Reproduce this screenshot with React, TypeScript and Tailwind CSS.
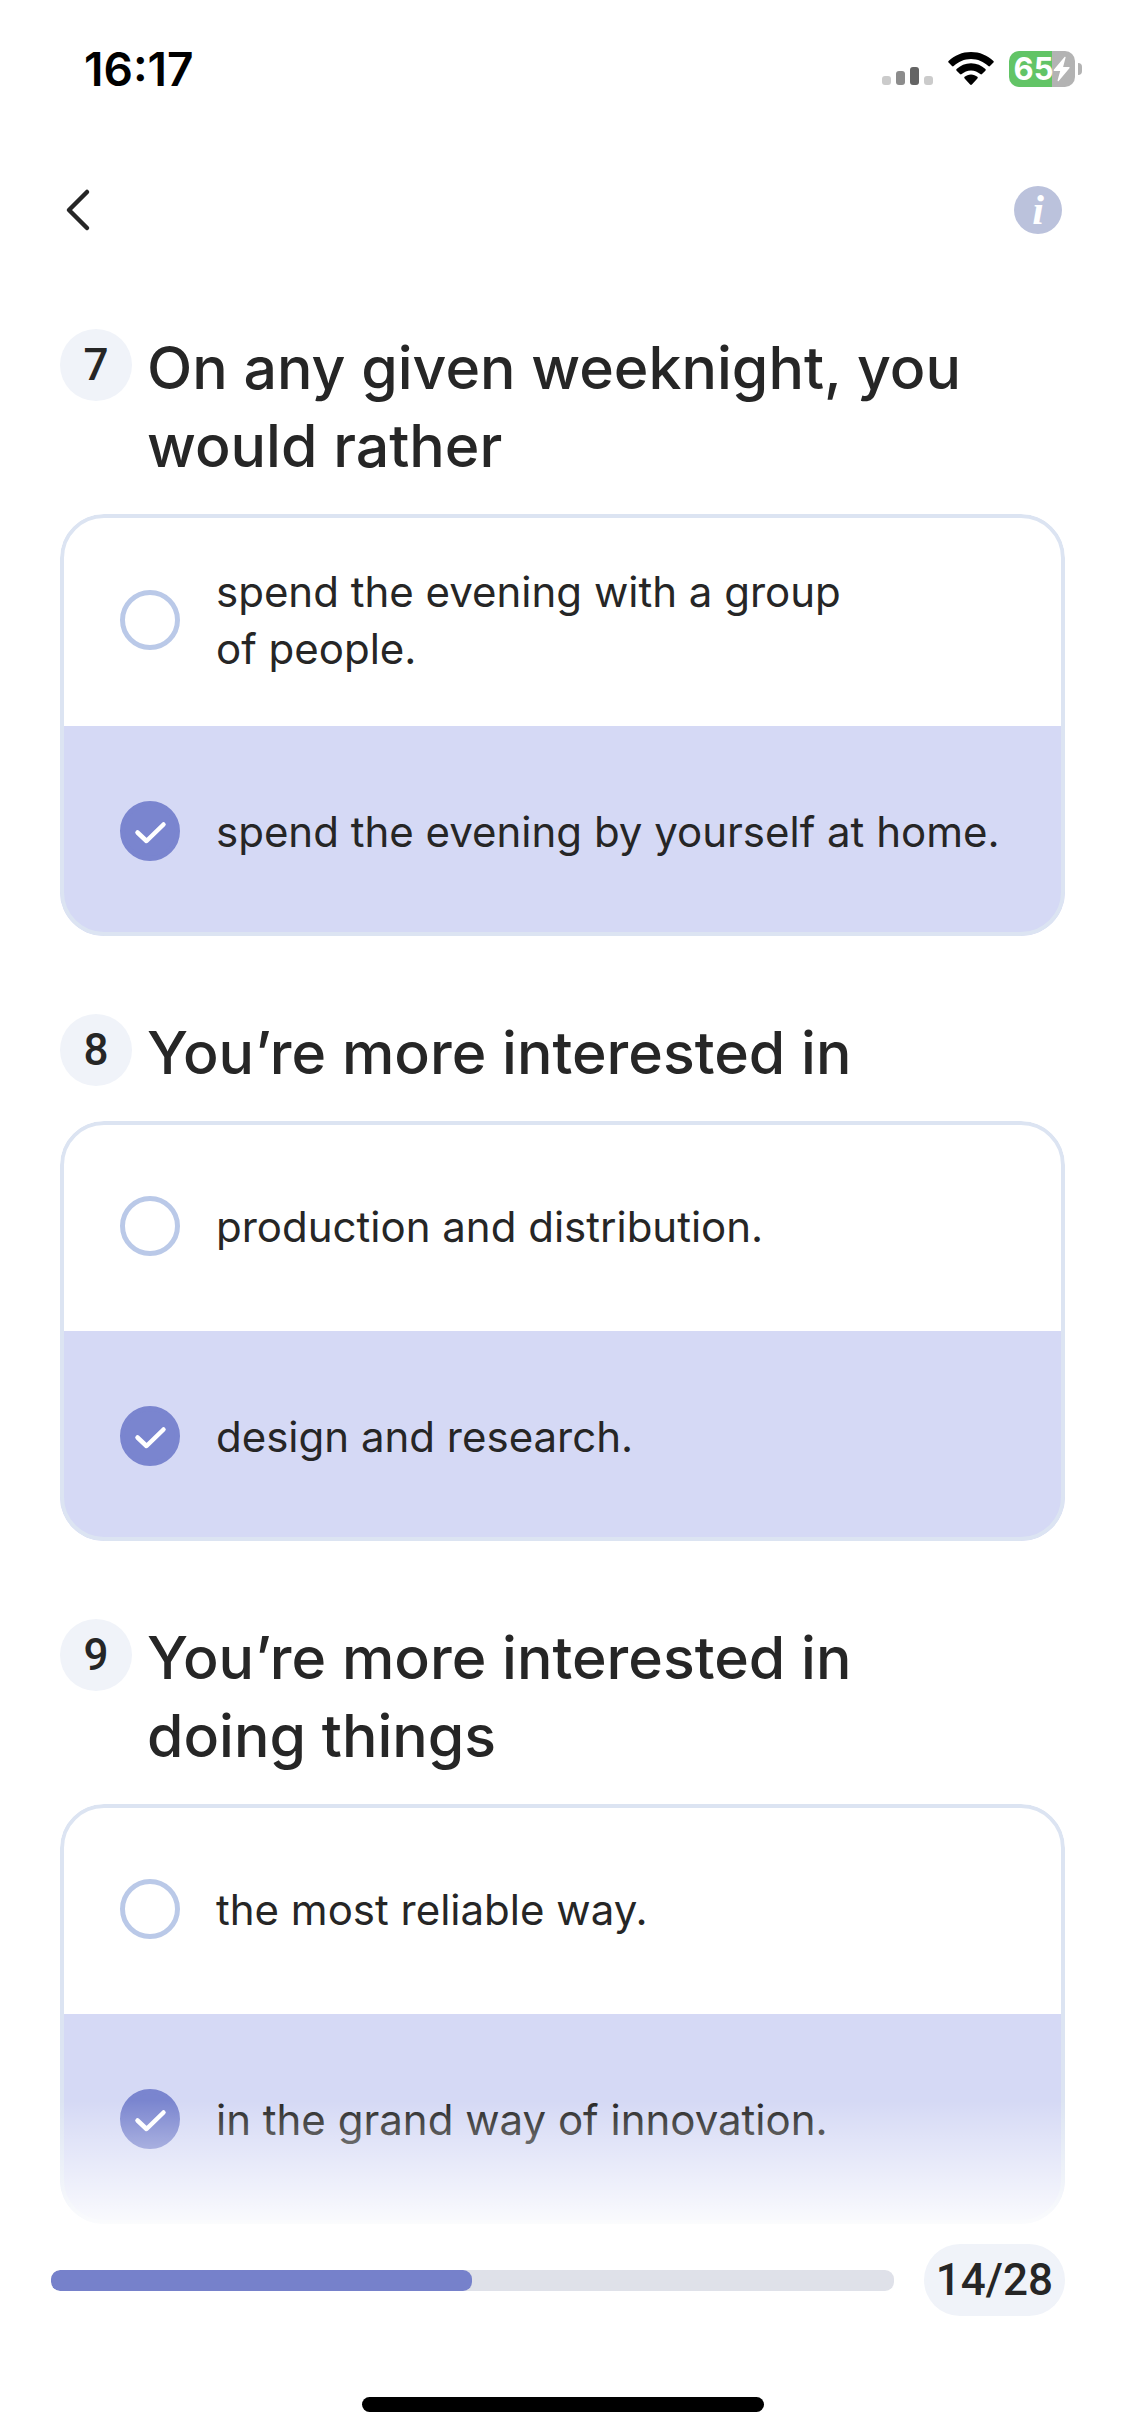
import { useState } from 'react';

const questions = [
  {
    number: 7,
    title: 'On any given weeknight, you would rather',
    options: ['spend the evening with a group of\u00a0people.', 'spend the evening by yourself at home.'],
  },
  {
    number: 8,
    title: 'You’re more interested in',
    options: ['production and distribution.', 'design and research.'],
  },
  {
    number: 9,
    title: 'You’re more interested in doing things',
    options: ['the most reliable way.', 'in the grand way of innovation.'],
  },
];

const total = 28;
const answered = 14;

function StatusBar() {
  return (
    <div className="flex h-[138px] items-center justify-between pl-[84px] pr-[43px]">
      <span className="text-[46px] leading-[52px] font-semibold text-black">16:17</span>
      <div className="flex items-center gap-[15px]">
        <svg width="51" height="36" viewBox="0 0 51 36" aria-hidden="true">
          <rect x="0" y="25" width="9" height="9" rx="3" fill="#cbcbcb" />
          <rect x="14" y="20" width="9" height="14" rx="3" fill="#8c8c8c" />
          <rect x="28" y="16" width="9" height="18" rx="3" fill="#646464" />
          <rect x="42" y="25" width="9" height="9" rx="3" fill="#cbcbcb" />
        </svg>
        <svg width="46" height="36" viewBox="0 0 46 36" aria-hidden="true">
          <path d="M23 1C14.300 1 6.400 4.400 .600 9.900a1.200 1.200 0 0 0 0 1.700l3.400 3.400a1.200 1.200 0 0 0 1.700 0C10.200 10.800 16.300 8 23 8s12.800 2.800 17.300 7a1.200 1.200 0 0 0 1.700 0l3.400-3.400a1.200 1.200 0 0 0 0-1.700C39.600 4.400 31.700 1 23 1Z" />
          <path d="M23 12.200c-5.600 0-10.700 2.200-14.400 5.800a1.200 1.200 0 0 0 0 1.700l3.400 3.400a1.200 1.200 0 0 0 1.700 0c2.400-2.300 5.700-3.700 9.300-3.700s6.900 1.400 9.300 3.700a1.200 1.200 0 0 0 1.700 0l3.400-3.400a1.200 1.200 0 0 0 0-1.700c-3.700-3.600-8.800-5.800-14.400-5.800Z" />
          <path d="M23 23.400c-2.500 0-4.700.900-6.400 2.400a1.100 1.100 0 0 0 0 1.600l5.500 6.200a1.300 1.300 0 0 0 1.800 0l5.500-6.200a1.100 1.100 0 0 0 0-1.600c-1.700-1.500-3.900-2.400-6.400-2.400Z" />
        </svg>
        <div className="flex items-center gap-[3px]">
          <div className="flex h-9 w-[66px] items-center justify-center rounded-[10px] bg-linear-to-r from-[#62c466] from-65% to-[#b3b3b3] to-65%">
            <span className="text-[31px] leading-9 font-bold text-white">65</span>
            <svg width="17" height="26" viewBox="0 0 17 26" fill="#fff" aria-hidden="true">
              <path d="M11.500 1 .800 13.800c-.400.500-.100 1.100.500 1.100h5.900L4.600 24.300c-.200.900.500 1.200 1.100.600L16.400 12.200c.400-.500.100-1.100-.500-1.100h-5.800l2.500-9.500c.200-.900-.500-1.300-1.100-.600Z" />
            </svg>
          </div>
          <div className="h-3 w-1 rounded-r-full bg-[#b3b3b3]" />
        </div>
      </div>
    </div>
  );
}

function Option({ name, label, checked, onChange }: { name: string; label: string; checked: boolean; onChange: () => void }) {
  return (
    <label className="flex min-h-[210px] cursor-pointer items-center gap-9 py-[49px] pr-10 pl-[60px] has-checked:bg-[#d5d9f5]">
      <span className="grid shrink-0">
        <input
          type="radio"
          name={name}
          checked={checked}
          onChange={onChange}
          className="col-start-1 row-start-1 size-[60px] appearance-none rounded-full border-5 border-[#bac9e8] checked:border-[#7a85cf] checked:bg-[#7a85cf]"
        />
        {checked && (
          <svg className="pointer-events-none col-start-1 row-start-1" width="60" height="60" viewBox="0 0 60 60" fill="none" aria-hidden="true">
            <path d="m17.500 31.500 9 8.500 17-16.500" stroke="#fff" strokeWidth="4.500" strokeLinecap="round" strokeLinejoin="round" />
          </svg>
        )}
      </span>
      <span className="text-[42px] leading-[57px]">{label}</span>
    </label>
  );
}

export default function App() {
  const [answers, setAnswers] = useState<Record<number, number>>({ 7: 1, 8: 1, 9: 1 });

  return (
    <div className="flex min-h-screen flex-col bg-white font-['Inter',sans-serif] text-[#262626]">
      <StatusBar />

      {/* Nav */}
      <header className="flex h-36 items-center justify-between px-[60px]">
        <button type="button" aria-label="Back" className="cursor-pointer">
          <svg width="36" height="48" viewBox="0 0 36 48" fill="none" aria-hidden="true">
            <path d="M27 6 9 24l18 18" stroke="#262626" strokeWidth="4.500" strokeLinecap="round" strokeLinejoin="round" />
          </svg>
        </button>
        <button
          type="button"
          aria-label="Information"
          className="mr-[3px] size-12 cursor-pointer rounded-full bg-[#bbc2dc] text-center font-['Liberation_Serif',serif] text-[42px] leading-[46px] font-bold text-white italic"
        >
          i
        </button>
      </header>

      {/* Questions */}
      <main className="flex flex-col gap-[78px] px-[60px] pt-[47px] pb-4">
        {questions.map((q) => (
          <section key={q.number}>
            <div className="mb-[29px] flex items-start gap-[15px]">
              <span className="flex size-[72px] shrink-0 items-center justify-center rounded-full bg-[#f0f3f9] font-['Roboto',sans-serif] text-[44px] leading-none font-medium">
                {q.number}
              </span>
              <h2 className="max-w-[840px] text-[59px] leading-[78px] font-medium">{q.title}</h2>
            </div>
            <div className="relative overflow-hidden rounded-[44px]" role="radiogroup" aria-label={q.title}>
              {q.options.map((label, i) => (
                <Option
                  key={label}
                  name={`question-${q.number}`}
                  label={label}
                  checked={answers[q.number] === i}
                  onChange={() => setAnswers({ ...answers, [q.number]: i })}
                />
              ))}
              <div className="pointer-events-none absolute inset-0 rounded-[44px] border-4 border-[#dce4f2]" />
            </div>
          </section>
        ))}
      </main>

      {/* Progress */}
      <footer className="sticky bottom-0 mt-auto bg-white">
        <div className="pointer-events-none absolute inset-x-0 bottom-full h-[140px] bg-linear-to-t from-white to-white/0" />
        <div className="flex items-center gap-[30px] pt-1 pr-[60px] pl-[51px]">
          <div
            role="progressbar"
            aria-label="Progress"
            aria-valuenow={answered}
            aria-valuemax={total}
            className="h-[21px] flex-1 overflow-hidden rounded-[9px] bg-[#dfe1e9]"
          >
            <div className="h-full rounded-[9px] bg-[#7681cb]" style={{ width: `${(answered / total) * 100}%` }} />
          </div>
          <span className="flex h-[72px] items-center rounded-full bg-[#f0f3f9] px-3 font-['Roboto',sans-serif] text-[44px] leading-none font-medium">
            {answered}/{total}
          </span>
        </div>
        <div className="flex justify-center pt-[81px] pb-6">
          <div className="h-[15px] w-[402px] rounded-full bg-black" />
        </div>
      </footer>
    </div>
  );
}
